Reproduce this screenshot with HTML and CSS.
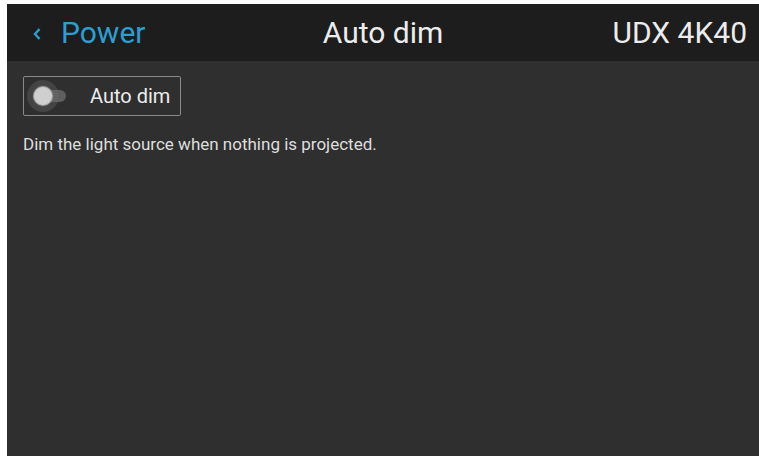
FILE: index.html
```html
<!DOCTYPE html>
<html lang="en">
<head>
    <meta charset="UTF-8">
    <meta name="viewport" content="width=device-width, initial-scale=1.0">
    <title>Auto dim</title>
    <link rel="stylesheet" href="styles.css">
</head>
<body>
    <div class="screen">
        <header class="topbar">
            <div class="back">
                <svg class="chevron" width="10" height="14" viewBox="0 0 10 14">
                    <path d="M7.5 2 L3 7 L7.5 12" fill="none" stroke="currentColor" stroke-width="2.4"/>
                </svg>
                <span class="back-label">Power</span>
            </div>
            <div class="title">Auto dim</div>
            <div class="device">UDX 4K40</div>
        </header>

        <main class="content">
            <button class="toggle-btn">
                <span class="switch">
                    <span class="track"></span>
                    <span class="knob"></span>
                </span>
                <span class="toggle-label">Auto dim</span>
            </button>
            <p class="hint">Dim the light source when nothing is projected.</p>
        </main>
    </div>
</body>
</html>
```

FILE: styles.css
```css
:root {
    --bar-color: #1d1d1d;
    --panel-color: #2f2f2f;
    --accent-color: #2c9fd2;
    --text-color: #ececec;
}

* {
    margin: 0;
    padding: 0;
    box-sizing: border-box;
    font-family: 'Roboto', 'Liberation Sans', sans-serif;
}

body {
    background: #ffffff;
    padding: 4px 0 0 7px;
    height: 456px;
    overflow: hidden;
}

.screen {
    height: 452px;
    background: var(--panel-color);
    display: flex;
    flex-direction: column;
}

.topbar {
    height: 57px;
    background: var(--bar-color);
    display: grid;
    grid-template-columns: 1fr auto 1fr;
    align-items: center;
    padding: 0 12px;
    color: var(--text-color);
    font-size: 30px;
}

.back {
    display: flex;
    align-items: center;
    color: var(--accent-color);
    padding-left: 13px;
}

.chevron {
    margin-right: 19px;
    margin-top: 3px;
}

.title {
    text-align: center;
}

.device {
    text-align: right;
}

.content {
    flex: 1;
    padding: 15px 16px;
}

.toggle-btn {
    display: flex;
    align-items: center;
    width: 158px;
    height: 40px;
    background: transparent;
    border: 1px solid #8a8a8a;
    border-radius: 2px;
    color: var(--text-color);
    padding: 0;
    cursor: pointer;
}

.switch {
    position: relative;
    width: 44px;
    height: 38px;
    margin-right: 22px;
}

.track {
    position: absolute;
    left: 16px;
    top: 13px;
    width: 26px;
    height: 12px;
    border-radius: 6px;
    background: #5e5e5e;
}

/* knob with a soft halo around it */
.knob {
    position: absolute;
    left: 10px;
    top: 10px;
    width: 18px;
    height: 18px;
    border-radius: 50%;
    background: #cfcfcf;
    box-shadow: 0 0 1px 1px #a8a8a8, 0 0 0 7px rgba(110, 110, 110, 0.35);
}

.toggle-label {
    font-size: 20px;
}

.hint {
    margin-top: 18px;
    color: #dedede;
    font-size: 17px;
}
```
